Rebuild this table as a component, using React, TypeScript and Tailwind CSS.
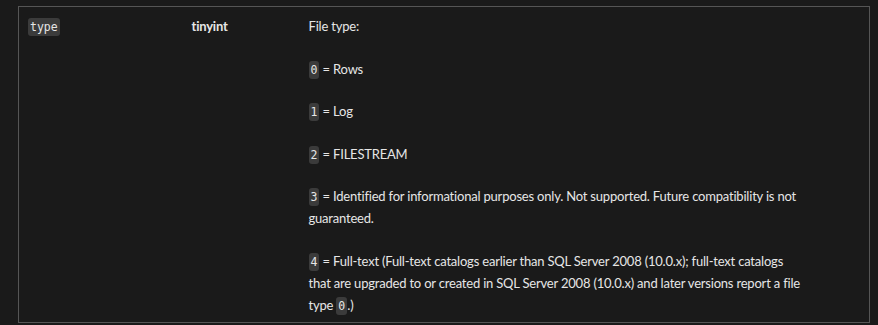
import React from 'react'

function Code({ children }: { children: React.ReactNode }) {
  return (
    <code className="rounded-[3px] bg-[#3b3b3b] px-[2px] py-[2px] font-['DejaVu_Sans_Mono',monospace] text-[11.5px] leading-none tracking-normal text-[#e6e6e6]">
      {children}
    </code>
  )
}

const values: { code: string; text: React.ReactNode }[] = [
  { code: '0', text: 'Rows' },
  { code: '1', text: 'Log' },
  { code: '2', text: 'FILESTREAM' },
  { code: '3', text: 'Identified for informational purposes only. Not supported. Future compatibility is not guaranteed.' },
  {
    code: '4',
    text: (
      <>
        Full-text (Full-text catalogs earlier than SQL Server 2008 (10.0.x); full-text catalogs that are upgraded to or
        created in SQL Server 2008 (10.0.x) and later versions report a file type <Code>0</Code>.)
      </>
    ),
  },
]

export default function App() {
  return (
    <div className="h-[325px] w-[878px] overflow-hidden bg-[#1a1a1a] pt-[6px] font-['Lato',sans-serif] text-[13px] leading-[22px] tracking-[-0.2px] text-[#e6e6e6]">
      <table className="ml-[18px] w-[852px] border-collapse">
        <tbody>
          <tr className="border-t border-b border-[#555555]">
            <td className="w-[163px] border-l border-[#555555] px-[9px] pt-[8px] align-top">
              <Code>type</Code>
            </td>
            <td className="w-[118px] px-[10px] pt-[8px] align-top font-bold">tinyint</td>
            <td className="border-r border-[#555555] pr-[68px] pl-[9px] pt-[8px] pb-[6px] align-top">
              <p>File type:</p>
              {values.map((v) => (
                <p key={v.code} className="mt-[20.6px]">
                  <Code>{v.code}</Code> = {v.text}
                </p>
              ))}
            </td>
          </tr>
        </tbody>
      </table>
    </div>
  )
}
